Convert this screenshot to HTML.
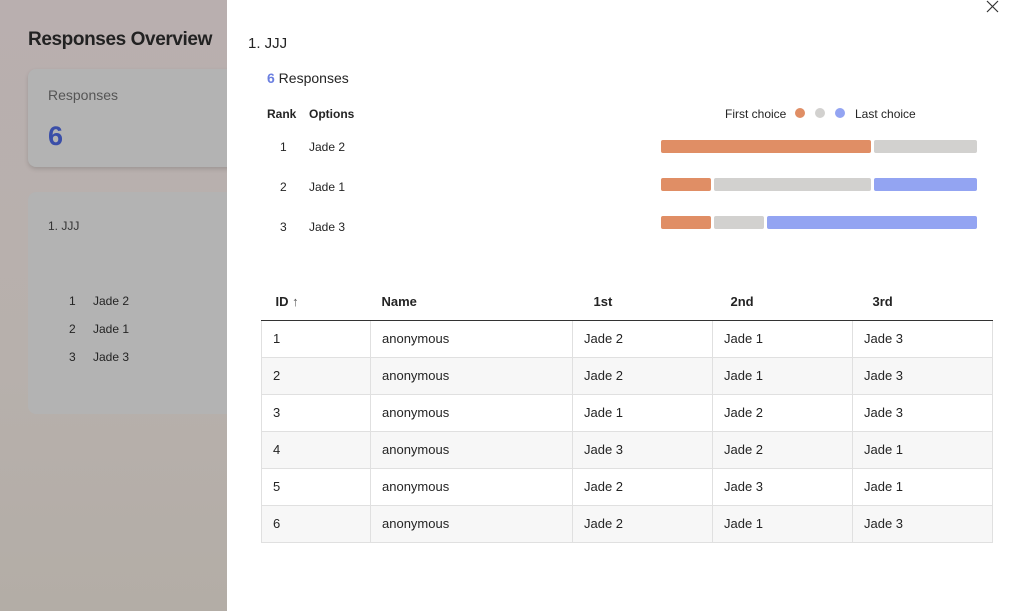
<!DOCTYPE html>
<html><head><meta charset="utf-8"><style>
*{margin:0;padding:0;box-sizing:border-box}
body{width:1014px;height:611px;overflow:hidden;font-family:"Liberation Sans",sans-serif;color:#242424;position:relative;background:#fff}
.left{position:absolute;left:0;top:0;width:227px;height:611px;background:linear-gradient(180deg,#b9afaf 0%,#b7b0ac 60%,#b3ada6 100%);overflow:hidden}
.left h1{position:absolute;left:28px;top:29px;font-size:19px;font-weight:bold;color:#222;white-space:nowrap;letter-spacing:-0.4px}
.card{position:absolute;left:28px;background:#b3b3b3;border-radius:8px;width:240px}
.t{position:absolute;font-size:12px;white-space:nowrap}
.panel{position:absolute;left:227px;top:0;width:787px;height:611px;background:#fff}
.bar{position:absolute;height:13px;border-radius:2px}
.o{background:#e08e65}.g{background:#d2d1cf}.b{background:#93a4f2}
table{position:absolute;left:261px;top:284px;width:732px;border-collapse:collapse;font-size:13px}
th{height:36px;text-align:left;font-weight:bold;font-size:13px;border-bottom:1px solid #333;padding-left:14px}
td{height:37px;border:1px solid #e0e0e0;padding-left:11px}
tr:nth-child(odd) td{background:#f7f7f7}
</style></head><body>
<div class="left">
<h1>Responses Overview</h1>
<div class="card" style="top:69px;height:98px;box-shadow:0 2px 4px rgba(0,0,0,.15)">
<div class="t" style="left:20px;top:18px;font-size:14px;color:#555">Responses</div>
<div class="t" style="left:20px;top:52px;font-size:27px;font-weight:bold;color:#3a4ea8">6</div>
</div>
<div class="card" style="top:192px;height:222px">
<div class="t" style="left:20px;top:27px;color:#333">1. JJJ</div>
<div class="t" style="left:41px;top:102px">1</div><div class="t" style="left:65px;top:102px">Jade 2</div>
<div class="t" style="left:41px;top:130px">2</div><div class="t" style="left:65px;top:130px">Jade 1</div>
<div class="t" style="left:41px;top:158px">3</div><div class="t" style="left:65px;top:158px">Jade 3</div>
</div>
</div>
<div class="panel"></div>
<svg style="position:absolute;left:986px;top:0" width="13" height="13" viewBox="0 0 13 13"><path d="M1 1L12 12M12 1L1 12" stroke="#333" stroke-width="1.2"/></svg>
<div class="t" style="left:248px;top:35px;font-size:15px">1. JJJ</div>
<div class="t" style="left:267px;top:70px;font-size:14px"><b style="color:#6b7fe0">6</b> Responses</div>
<div class="t" style="left:267px;top:107px;font-weight:bold">Rank</div>
<div class="t" style="left:309px;top:107px;font-weight:bold">Options</div>
<div class="t" style="left:280px;top:140px">1</div><div class="t" style="left:309px;top:140px">Jade 2</div>
<div class="t" style="left:280px;top:180px">2</div><div class="t" style="left:309px;top:180px">Jade 1</div>
<div class="t" style="left:280px;top:220px">3</div><div class="t" style="left:309px;top:220px">Jade 3</div>
<div class="t" style="left:725px;top:107px">First choice</div>
<div style="position:absolute;left:795px;top:108px;width:10px;height:10px;border-radius:50%;background:#e08e65"></div>
<div style="position:absolute;left:815px;top:108px;width:10px;height:10px;border-radius:50%;background:#d2d1cf"></div>
<div style="position:absolute;left:835px;top:108px;width:10px;height:10px;border-radius:50%;background:#93a4f2"></div>
<div class="t" style="left:855px;top:107px">Last choice</div>
<div class="bar o" style="left:661px;top:140px;width:210px"></div><div class="bar g" style="left:874px;top:140px;width:103px"></div>
<div class="bar o" style="left:661px;top:178px;width:50px"></div><div class="bar g" style="left:714px;top:178px;width:157px"></div><div class="bar b" style="left:874px;top:178px;width:103px"></div>
<div class="bar o" style="left:661px;top:216px;width:50px"></div><div class="bar g" style="left:714px;top:216px;width:50px"></div><div class="bar b" style="left:767px;top:216px;width:210px"></div>
<table>
<tr><th style="width:109px">ID <span style="font-weight:normal;color:#555">↑</span></th><th style="width:202px;padding-left:11px">Name</th><th style="width:140px;padding-left:21px">1st</th><th style="width:140px;padding-left:18px">2nd</th><th style="padding-left:20px">3rd</th></tr>
<tr><td>1</td><td>anonymous</td><td>Jade 2</td><td>Jade 1</td><td>Jade 3</td></tr>
<tr><td>2</td><td>anonymous</td><td>Jade 2</td><td>Jade 1</td><td>Jade 3</td></tr>
<tr><td>3</td><td>anonymous</td><td>Jade 1</td><td>Jade 2</td><td>Jade 3</td></tr>
<tr><td>4</td><td>anonymous</td><td>Jade 3</td><td>Jade 2</td><td>Jade 1</td></tr>
<tr><td>5</td><td>anonymous</td><td>Jade 2</td><td>Jade 3</td><td>Jade 1</td></tr>
<tr><td>6</td><td>anonymous</td><td>Jade 2</td><td>Jade 1</td><td>Jade 3</td></tr>
</table>
</body></html>
